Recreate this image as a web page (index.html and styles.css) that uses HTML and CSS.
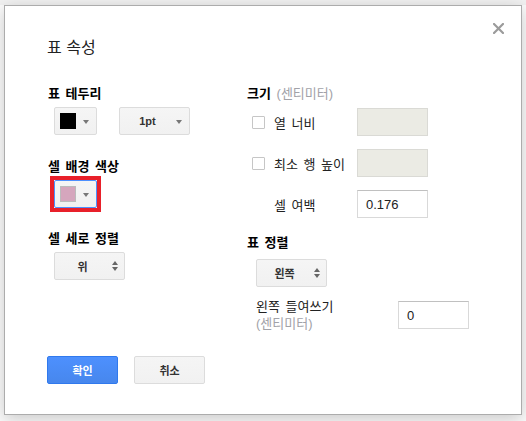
FILE: index.html
```html
<!DOCTYPE html>
<html lang="ko">
<head>
<meta charset="utf-8">
<link rel="stylesheet" href="styles.css">
</head>
<body>
<div class="dialog">
  <button class="close" aria-label="닫기">
    <svg width="11" height="11" viewBox="0 0 11 11"><path d="M1 1L10 10M10 1L1 10" stroke="#9b9b9b" stroke-width="2.2" stroke-linecap="square"/></svg>
  </button>
  <div class="title">표 속성</div>
  <div class="cols">
    <div class="col left">
      <div class="label">표 테두리</div>
      <div class="ctrl-row">
        <div class="btn color-btn"><span class="swatch black"></span><span class="arrow"></span></div>
        <div class="btn select wide"><span class="sel-text">1pt</span><span class="arrow"></span></div>
      </div>
      <div class="label l2">셀 배경 색상</div>
      <div class="highlight">
        <div class="btn color-btn focused"><span class="swatch pink"></span><span class="arrow"></span></div>
      </div>
      <div class="label l3">셀 세로 정렬</div>
      <div class="ctrl-row">
        <div class="btn select"><span class="sel-text">위</span><span class="updown"><i class="up"></i><i class="down"></i></span></div>
      </div>
    </div>
    <div class="col right">
      <div class="label">크기 <span class="muted">(센티미터)</span></div>
      <div class="field-row r1">
        <span class="check"></span><span class="ftext">열 너비</span>
        <span class="input disabled"></span>
      </div>
      <div class="field-row r2">
        <span class="check"></span><span class="ftext">최소 행 높이</span>
        <span class="input disabled"></span>
      </div>
      <div class="field-row r2">
        <span class="check-space"></span><span class="ftext">셀 여백</span>
        <span class="input">0.176</span>
      </div>
      <div class="label l4">표 정렬</div>
      <div class="ctrl-row indent">
        <div class="btn select"><span class="sel-text">왼쪽</span><span class="updown"><i class="up"></i><i class="down"></i></span></div>
      </div>
      <div class="indent-row">
        <div class="itext">왼쪽 들여쓰기<br><span class="muted">(센티미터)</span></div>
        <span class="input">0</span>
      </div>
    </div>
  </div>
  <div class="buttons">
    <button class="action ok">확인</button>
    <button class="action cancel">취소</button>
  </div>
</div>
</body>
</html>
```
FILE: styles.css
```css
* { box-sizing: border-box; }
html, body { margin: 0; padding: 0; }
body {
  width: 526px;
  height: 421px;
  overflow: hidden;
  background: linear-gradient(#f1f1f1 0 5px, #fbfbfb 5px);
  font-family: Arial, "Liberation Sans", "Noto Sans CJK KR", sans-serif;
  font-size: 13px;
  color: #222;
  padding: 5px 0 0 4px;
}
.dialog {
  position: relative;
  width: 518px;
  height: 410px;
  background: #fff;
  border: 1px solid #acacac;
  box-shadow: 0 4px 16px rgba(0,0,0,0.2);
  padding: 32px 42px 0 42px;
}
.close {
  position: absolute;
  right: 17px;
  top: 17px;
  width: 11px;
  height: 11px;
  padding: 0;
  border: 0;
  background: none;
  display: block;
}
.close svg { display: block; }
.title {
  font-size: 16px;
  line-height: 20px;
  color: #222;
}
.cols {
  display: flex;
  margin-top: 27px;
}
.col { flex: none; }
.col.left { width: 199px; }
.col.right { width: 230px; }
.label {
  font-weight: bold;
  color: #000;
  line-height: 17px;
  padding-left: 1px;
  word-spacing: 2px;
}
.label.l2 { margin-top: 23px; }
.label.l3 { margin-top: 18px; }
.label.l4 { margin-top: 16px; }
.muted { color: #a2a2a8; font-weight: normal; word-spacing: 0; }
.ctrl-row {
  display: flex;
  gap: 22px;
  margin-top: 5px;
  padding-left: 7px;
}
.ctrl-row.indent { padding-left: 10px; margin-top: 8px; }
.btn {
  height: 28px;
  border: 1px solid #dcdcdc;
  border-radius: 2px;
  background: linear-gradient(#f5f5f5, #f1f1f1);
  display: flex;
  align-items: center;
  position: relative;
}
.color-btn {
  width: 43px;
  padding-left: 5px;
}
.color-btn.focused { border-color: #4d90fe; }
.swatch {
  width: 16px;
  height: 16px;
  display: block;
}
.swatch.black { background: #000; }
.swatch.pink { background: #d5a6bd; border: 1px solid #bbb; }
.arrow {
  width: 0;
  height: 0;
  border-left: 3px solid transparent;
  border-right: 3px solid transparent;
  border-top: 4px solid #777;
  position: absolute;
  right: 7px;
  top: 12px;
}
.select { width: 71px; }
.sel-text {
  font-weight: bold;
  font-size: 11px;
  color: #333;
  flex: 1;
  text-align: center;
  padding-right: 14px;
}
.updown {
  position: absolute;
  right: 6px;
  top: 8px;
  display: flex;
  flex-direction: column;
  gap: 2px;
}
.updown i {
  display: block;
  width: 0;
  height: 0;
  border-left: 3.5px solid transparent;
  border-right: 3.5px solid transparent;
}
.updown .up { border-bottom: 4px solid #666; }
.updown .down { border-top: 4px solid #666; }
.highlight {
  margin-top: 1px;
  margin-left: 3px;
  width: 51px;
  border: 4px solid #e8202a;
}
.field-row {
  display: flex;
  align-items: center;
  height: 28px;
  padding-left: 6px;
}
.field-row.r1 { margin-top: 6px; }
.field-row.r2 { margin-top: 13px; }
.check {
  width: 13px;
  height: 13px;
  border: 1px solid #c6c6c6;
  border-radius: 1px;
  background: #fff;
  flex: none;
}
.check-space { width: 13px; flex: none; }
.ftext {
  margin-left: 9px;
  width: 83px;
  flex: none;
  color: #222;
  word-spacing: 2px;
}
.input {
  width: 71px;
  height: 28px;
  border: 1px solid #d9d9d9;
  border-top-color: #c0c0c0;
  background: #fff;
  display: flex;
  align-items: center;
  padding-left: 8px;
  font-size: 13px;
  color: #222;
  flex: none;
}
.input.disabled { background: #ebebe4; border-color: #dadad5; }
.indent-row {
  display: flex;
  align-items: center;
  margin-top: 11px;
  padding-left: 10px;
}
.itext {
  width: 142px;
  flex: none;
  line-height: 17px;
  color: #222;
  word-spacing: 2px;
}
.buttons {
  display: flex;
  gap: 16px;
  margin-top: 24px;
}
.action {
  width: 71px;
  height: 28px;
  border-radius: 2px;
  font-family: Arial, "Liberation Sans", "Noto Sans CJK KR", sans-serif;
  font-weight: bold;
  font-size: 11px;
  padding: 0;
}
.ok {
  background: linear-gradient(#4d90fe, #4787ed);
  border: 1px solid #3079ed;
  color: #fff;
}
.cancel {
  background: linear-gradient(#f5f5f5, #f1f1f1);
  border: 1px solid #dcdcdc;
  color: #333;
}
```
